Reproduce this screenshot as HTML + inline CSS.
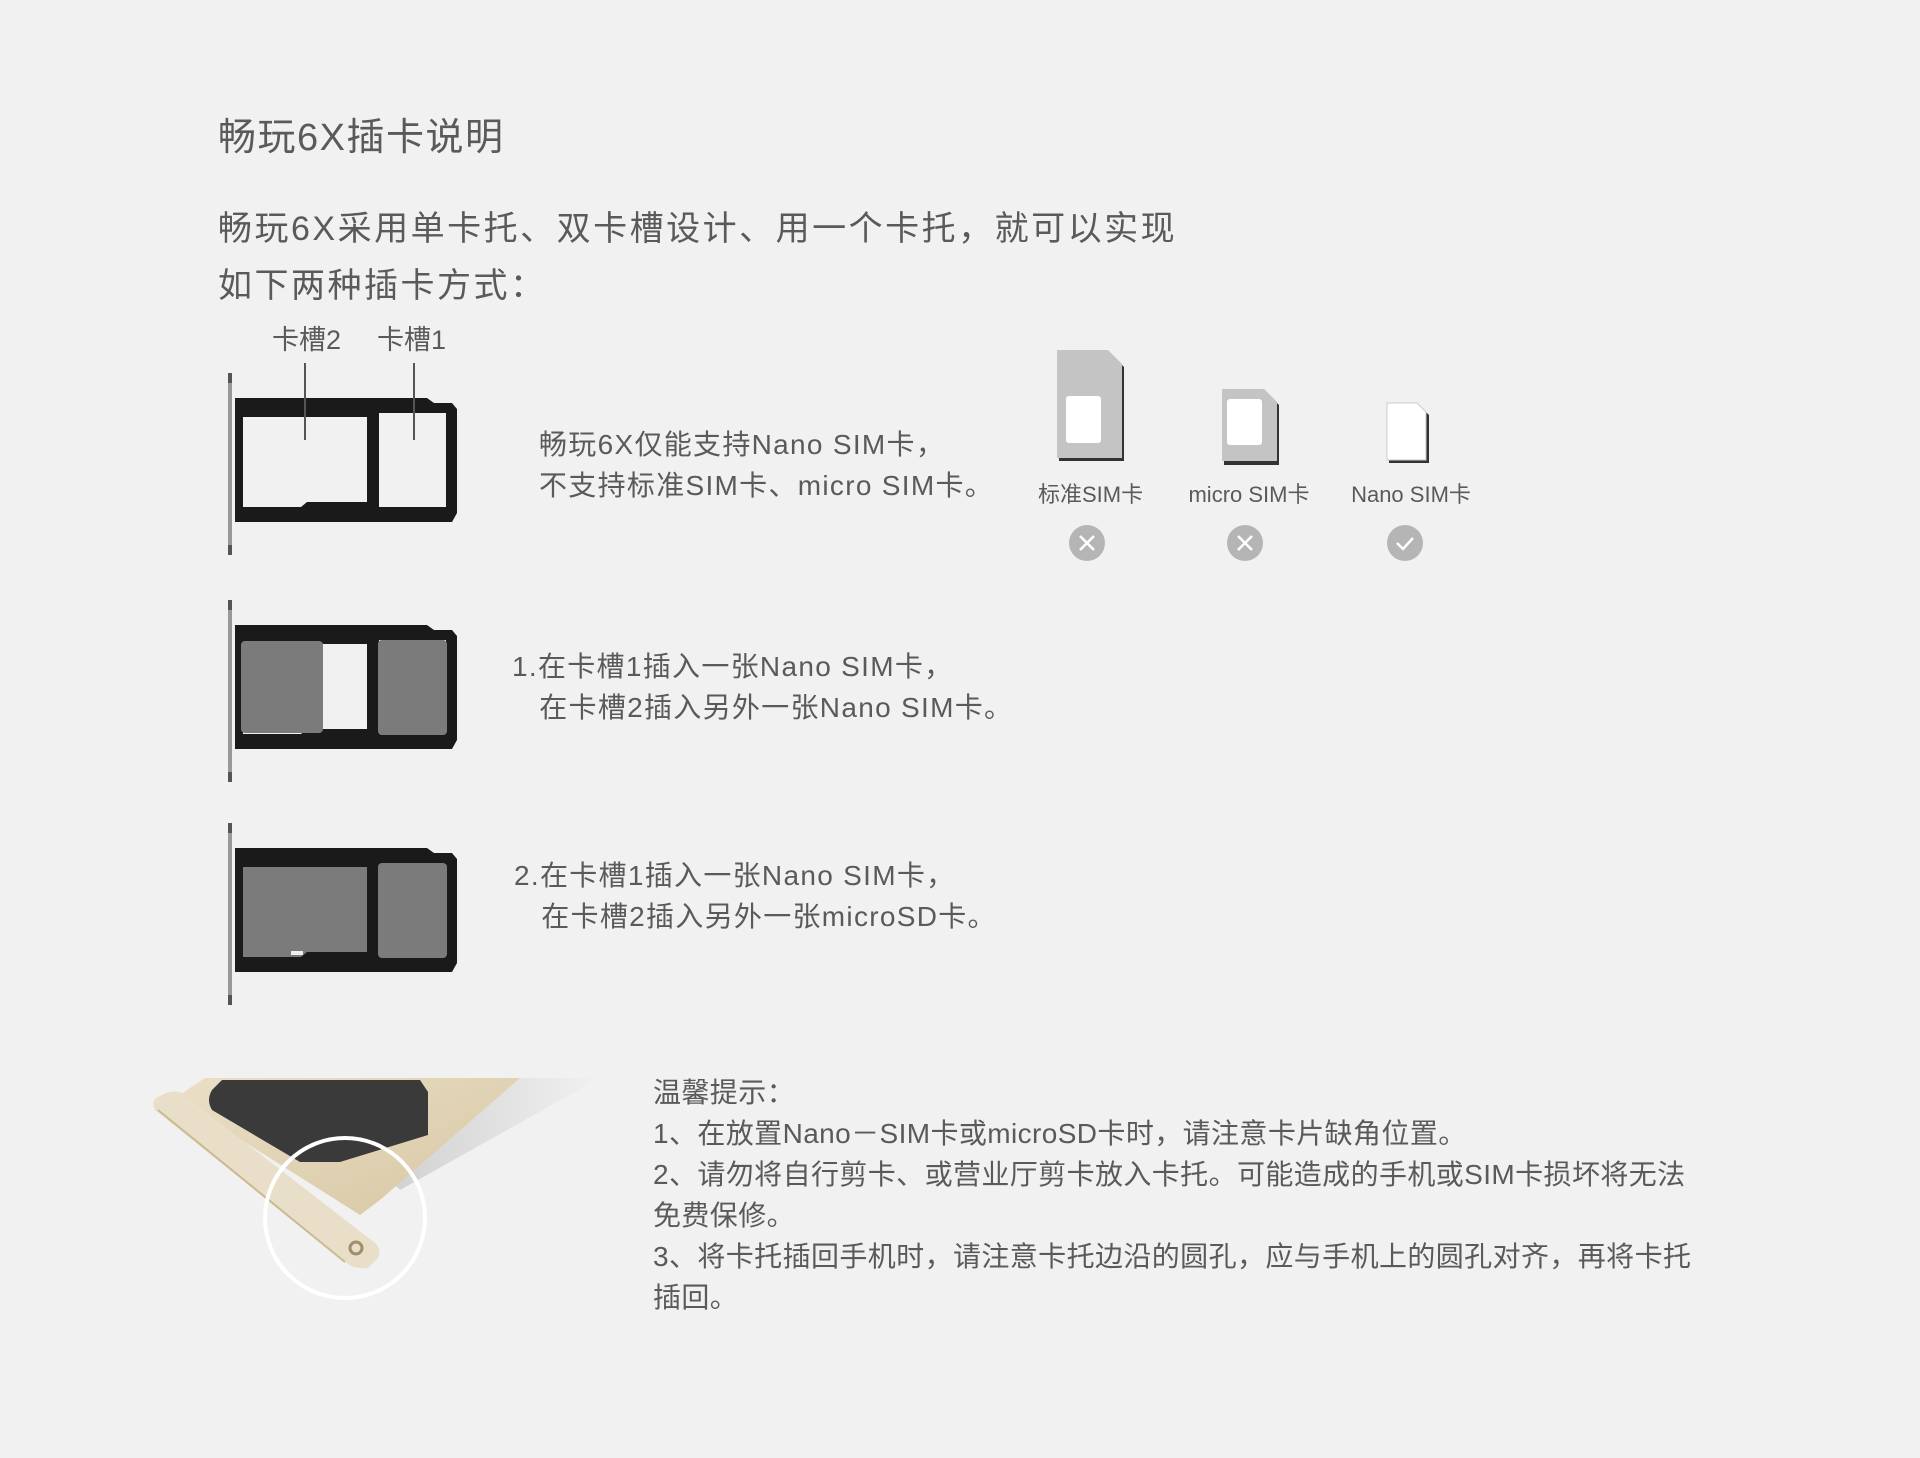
<!DOCTYPE html>
<html><head><meta charset="utf-8"><style>
html,body{margin:0;padding:0}
body{width:1920px;height:1458px;background:#f1f1f1;position:relative;overflow:hidden;font-family:"Liberation Sans","Noto Sans CJK SC",sans-serif;color:#5a5a5a}
.t{position:absolute;white-space:nowrap}
svg{position:absolute;left:0;top:0}
</style></head><body>
<div class="t" style="left:218px;top:106px;font-size:38px;letter-spacing:1.5px">畅玩6X插卡说明</div>
<div class="t" style="left:218px;top:201px;font-size:34px;line-height:57px;letter-spacing:2.5px">畅玩6X采用单卡托、双卡槽设计、用一个卡托，就可以实现<br>如下两种插卡方式：</div>
<div class="t" style="left:272px;top:318px;font-size:27px">卡槽2</div>
<div class="t" style="left:377px;top:318px;font-size:27px">卡槽1</div>

<div class="t" style="left:539px;top:424px;font-size:28px;line-height:41px;letter-spacing:1.3px">畅玩6X仅能支持Nano SIM卡，<br>不支持标准SIM卡、micro SIM卡。</div>
<div class="t" style="left:512px;top:646px;font-size:28px;line-height:41px;letter-spacing:1.3px">1.在卡槽1插入一张Nano SIM卡，<br>&nbsp;&nbsp;&nbsp;在卡槽2插入另外一张Nano SIM卡。</div>
<div class="t" style="left:514px;top:855px;font-size:28px;line-height:41px;letter-spacing:1.3px">2.在卡槽1插入一张Nano SIM卡，<br>&nbsp;&nbsp;&nbsp;在卡槽2插入另外一张microSD卡。</div>

<div class="t" style="left:1038px;top:477px;font-size:22px;width:104px;text-align:center">标准SIM卡</div>
<div class="t" style="left:1179px;top:477px;font-size:22px;width:140px;text-align:center">micro SIM卡</div>
<div class="t" style="left:1341px;top:477px;font-size:22px;width:140px;text-align:center">Nano SIM卡</div>

<div class="t" style="left:653px;top:1072px;font-size:28px;line-height:41px;letter-spacing:0.4px">温馨提示：<br>1、在放置Nano－SIM卡或microSD卡时，请注意卡片缺角位置。<br>2、请勿将自行剪卡、或营业厅剪卡放入卡托。可能造成的手机或SIM卡损坏将无法<br>免费保修。<br>3、将卡托插回手机时，请注意卡托边沿的圆孔，应与手机上的圆孔对齐，再将卡托<br>插回。</div>

<svg width="1920" height="1458" viewBox="0 0 1920 1458">
<defs>
<g id="tray">
<rect x="1" y="0" width="4" height="182" fill="#999"/>
<rect x="1" y="0" width="4" height="10" fill="#555"/>
<rect x="1" y="172" width="4" height="10" fill="#555"/>
<path d="M8 25 H200 L207 30 H225 L230 36 V140 L225 149 H8 Z" fill="#1a1a1a"/>
</g>
<linearGradient id="gold" x1="0" y1="0" x2="1" y2="1"><stop offset="0" stop-color="#eadfc6"/><stop offset="1" stop-color="#d6c6a2"/></linearGradient>
<linearGradient id="sh" x1="0" y1="0" x2="1" y2="0"><stop offset="0" stop-color="#c8c8c8"/><stop offset="1" stop-color="#f1f1f1"/></linearGradient>
</defs>
<g transform="translate(227,373)">
<use href="#tray"/>
<path d="M16 44 H140 V129 H80 L74 134 H16 Z" fill="#f1f1f1"/>
<path d="M152 40 H219 V134 H152 Z" fill="#f1f1f1"/>
</g>
<line x1="305" y1="363" x2="305" y2="440" stroke="#555" stroke-width="2"/>
<line x1="414" y1="363" x2="414" y2="440" stroke="#555" stroke-width="2"/>
<g transform="translate(227,600)">
<use href="#tray"/>
<path d="M16 44 H140 V129 H80 L74 134 H16 Z" fill="#f1f1f1"/>
<path d="M152 40 H219 V134 H152 Z" fill="#f1f1f1"/>
<rect x="14" y="41" width="82" height="92" rx="4" fill="#7b7b7b"/>
<rect x="151" y="40" width="69" height="95" rx="4" fill="#7b7b7b"/>
</g>
<g transform="translate(227,823)">
<use href="#tray"/>
<path d="M16 44 H140 V129 H80 L74 134 H16 Z" fill="#7b7b7b"/>
<rect x="151" y="40" width="69" height="95" rx="4" fill="#7b7b7b"/>
<rect x="64" y="128" width="12" height="4" fill="#eee"/>
</g>
<path d="M1059 353 H1110 L1124 367 V461 H1059 Z" fill="#333"/>
<path d="M1057 350 H1108 L1122 364 V458 H1057 Z" fill="#c4c4c4"/>
<rect x="1066" y="396" width="35" height="47" rx="3" fill="#fff"/>
<path d="M1224 392 H1266 L1279 405 V465 H1224 Z" fill="#333"/>
<path d="M1222 389 H1264 L1277 402 V461 H1222 Z" fill="#c4c4c4"/>
<rect x="1227" y="399" width="35" height="46" rx="3" fill="#fff"/>
<path d="M1389 405 H1419 L1429 415 V463 H1389 Z" fill="#333"/>
<path d="M1387 403 H1417 L1426 412 V460 H1387 Z" fill="#fff" stroke="#ccc"/>
<circle cx="1087" cy="543" r="18" fill="#b5b5b5"/>
<path d="M1080 536 L1094 550 M1094 536 L1080 550" stroke="#fff" stroke-width="2.5"/>
<circle cx="1245" cy="543" r="18" fill="#b5b5b5"/>
<path d="M1238 536 L1252 550 M1252 536 L1238 550" stroke="#fff" stroke-width="2.5"/>
<circle cx="1405" cy="543" r="18" fill="#b5b5b5"/>
<path d="M1397 543 L1403 549 L1413 538" stroke="#fff" stroke-width="2.5" fill="none"/>
<path d="M520 1078 H600 L400 1190 L385 1175 Z" fill="url(#sh)" opacity="0.8"/>
<path d="M205 1078 H520 L380 1200 L360 1215 L175 1098 Z" fill="url(#gold)"/>
<path d="M222 1080 H420 L428 1092 V1135 L340 1162 L300 1162 L212 1110 Q206 1100 212 1090 Z" fill="#3a3a3a"/>
<path d="M160 1096 Q150 1100 155 1110 L345 1262 Q355 1270 368 1268 L378 1258 Q382 1250 375 1243 L180 1092 Q170 1090 160 1096 Z" fill="#e9dfc8"/>
<path d="M158 1110 L345 1262" stroke="#cbb994" stroke-width="2"/>
<circle cx="356" cy="1248" r="6" fill="none" stroke="#a08e6a" stroke-width="3"/>
<circle cx="345" cy="1218" r="80" fill="none" stroke="#fff" stroke-width="4"/>
</svg>
</body></html>
